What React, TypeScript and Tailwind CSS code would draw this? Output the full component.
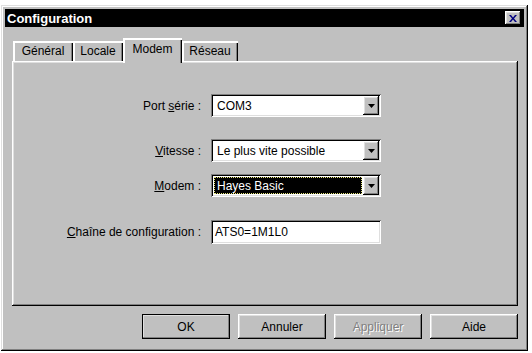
const raised =
  'shadow-[inset_-1px_-1px_#000,inset_1px_1px_#fff,inset_-2px_-2px_#808080,inset_2px_2px_#dfdfdf]';
const sunken =
  'shadow-[inset_1px_1px_#808080,inset_-1px_-1px_#fff,inset_2px_2px_#000,inset_-2px_-2px_#dfdfdf]';

const tabs = [
  { label: 'Général', w: 'w-[60px]' },
  { label: 'Locale', w: 'w-[50px]' },
  { label: 'Modem', w: 'w-[59px]', active: true },
  { label: 'Réseau', w: 'w-[56px]' },
];

function DropArrow() {
  return (
    <div className={`flex h-[19px] w-[16px] shrink-0 items-center justify-center bg-[#c0c0c0] ${raised}`}>
      <svg width="7" height="4" viewBox="0 0 7 4">
        <path d="M0 0h7L3.5 4z" fill="#000" />
      </svg>
    </div>
  );
}

function Combo({ value, focused }: { value: string; focused?: boolean }) {
  return (
    <div className={`flex h-[23px] w-[170px] items-center bg-white p-[2px] ${sunken}`}>
      <div className="flex h-full flex-1 items-center pl-[1px] pr-[1px]">
        {focused ? (
          <div className="flex h-[17px] w-full items-center border border-dotted border-[#e6e67a] bg-black pl-[2px] text-white">
            {value}
          </div>
        ) : (
          <span className="pl-[3px] text-black">{value}</span>
        )}
      </div>
      <DropArrow />
    </div>
  );
}

function Row({ label, children, className }: { label: React.ReactNode; children: React.ReactNode; className: string }) {
  return (
    <div className={`flex items-center ${className}`}>
      <div className="w-[189px] text-right text-black">{label}</div>
      <div className="ml-[10px]">{children}</div>
    </div>
  );
}

function Button({ label, isDefault, disabled }: { label: string; isDefault?: boolean; disabled?: boolean }) {
  return (
    <div
      className={`flex h-[25px] w-[88px] items-center justify-center bg-[#c0c0c0] ${raised} ${
        isDefault ? 'outline outline-1 -outline-offset-1 outline-black' : ''
      }`}
    >
      {disabled ? (
        <span className="text-[#808080] [text-shadow:1px_1px_0_#fff]">{label}</span>
      ) : (
        <span className="text-black">{label}</span>
      )}
    </div>
  );
}

export default function App() {
  return (
    <div className="h-[353px] w-[532px] bg-white font-['Liberation_Sans',Arial,sans-serif] text-[12px] leading-none">
      <div
        className={`ml-[1px] mt-[5px] flex h-[346px] w-[527px] flex-col bg-[#c0c0c0] p-[4px] shadow-[inset_-1px_-1px_#000,inset_1px_1px_#dfdfdf,inset_-2px_-2px_#808080,inset_2px_2px_#fff]`}
      >
        {/* barre de titre */}
        <div className="flex h-[18px] items-center justify-between bg-black pl-[2px] pr-[3px]">
          <span className="text-[13px] font-bold text-white">Configuration</span>
          <div className={`flex h-[14px] w-[16px] items-center justify-center bg-[#c0c0c0] ${raised}`}>
            <svg width="8" height="7" viewBox="0 0 8 7">
              <path d="M0 0h2l2 2.5L6 0h2L5 3.5 8 7H6L4 4.5 2 7H0l3-3.5z" fill="#000080" />
            </svg>
          </div>
        </div>

        <div className="flex flex-1 flex-col pl-[7px] pr-[5px] pt-[11px]">
          {/* onglets */}
          <div className="relative z-10 flex h-[23px] items-end pl-[1px]">
            {tabs.map((t) =>
              t.active ? (
                <div
                  key={t.label}
                  className={`${t.w} -mb-[2px] flex h-[25px] items-start justify-center bg-[#c0c0c0] pt-[5px] shadow-[inset_2px_0_#fff,inset_0_2px_#fff,inset_-1px_0_#000,inset_-2px_0_#808080]`}
                >
                  {t.label}
                </div>
              ) : (
                <div
                  key={t.label}
                  className={`${t.w} flex h-[20px] items-center justify-center bg-[#c0c0c0] shadow-[inset_2px_0_#fff,inset_0_2px_#fff,inset_-1px_0_#000,inset_-2px_0_#808080]`}
                >
                  {t.label}
                </div>
              ),
            )}
          </div>

          {/* panneau */}
          <div className={`flex h-[245px] w-[506px] flex-col pt-[33px] ${raised}`}>
            <Row
              className=""
              label={
                <>
                  Port <u>s</u>érie :
                </>
              }
            >
              <Combo value="COM3" />
            </Row>
            <Row
              className="mt-[22px]"
              label={
                <>
                  <u>V</u>itesse :
                </>
              }
            >
              <Combo value="Le plus vite possible" />
            </Row>
            <Row
              className="mt-[12px]"
              label={
                <>
                  <u>M</u>odem :
                </>
              }
            >
              <Combo value="Hayes Basic" focused />
            </Row>
            <Row
              className="mt-[23px]"
              label={
                <>
                  <u>C</u>haîne de configuration :
                </>
              }
            >
              <div className={`flex h-[24px] w-[170px] items-center bg-white pl-[4px] ${sunken}`}>ATS0=1M1L0</div>
            </Row>
          </div>

          {/* boutons */}
          <div className="mt-[8px] flex w-[506px] justify-end gap-[8px]">
            <Button label="OK" isDefault />
            <Button label="Annuler" />
            <Button label="Appliquer" disabled />
            <Button label="Aide" />
          </div>
        </div>
      </div>
    </div>
  );
}
